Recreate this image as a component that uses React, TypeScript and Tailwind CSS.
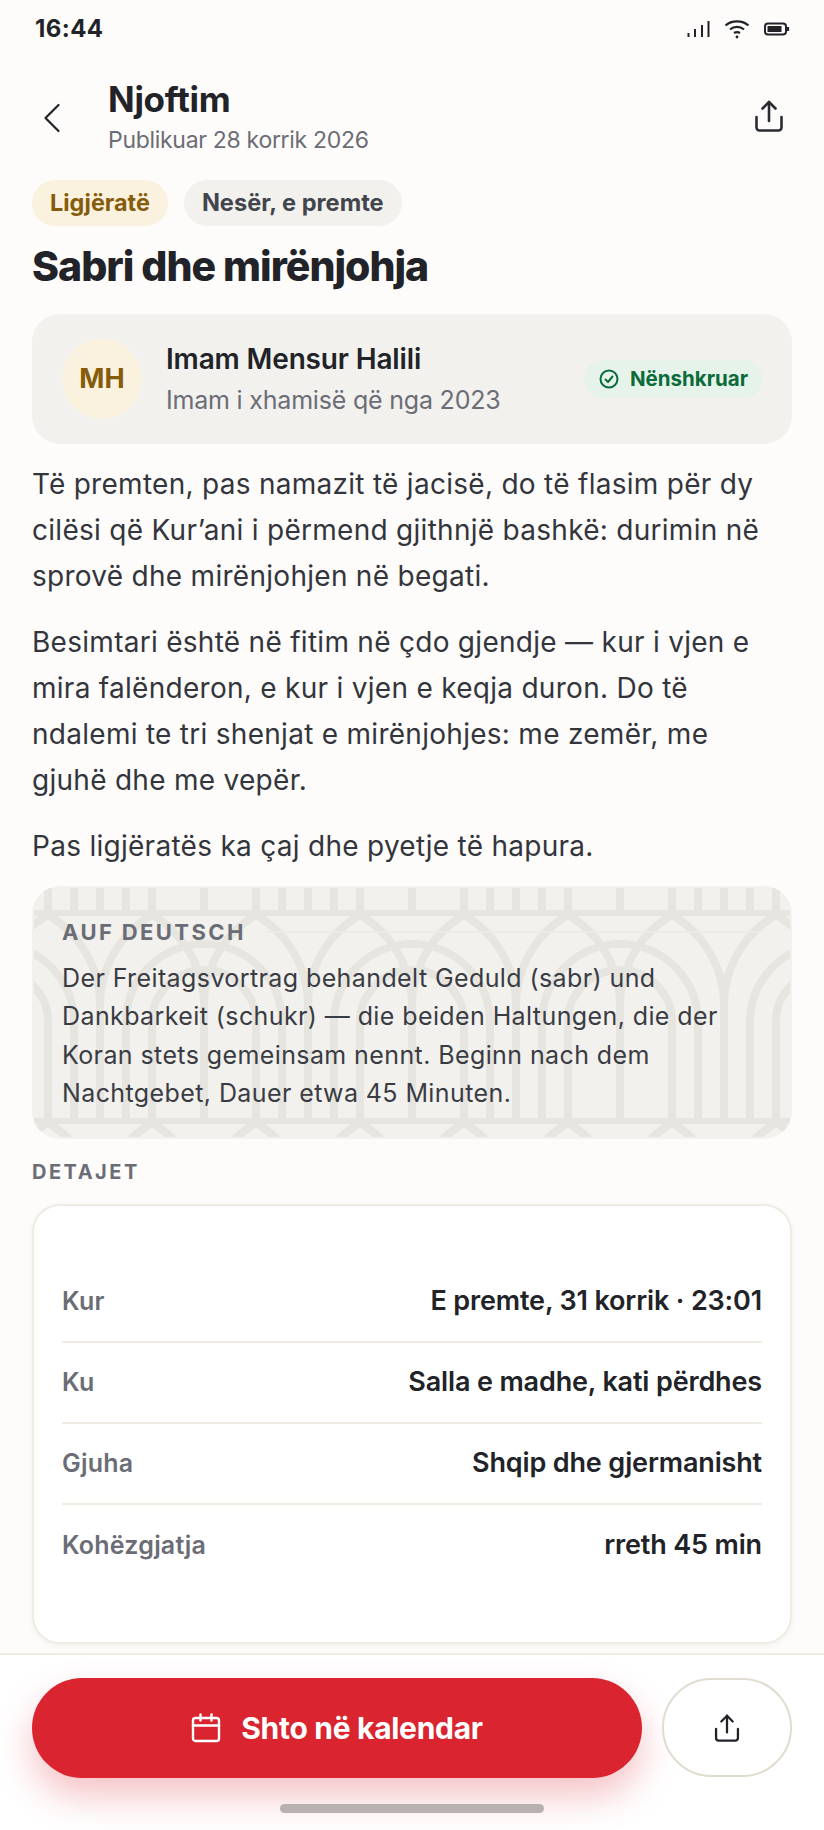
const rows = [
  { label: 'Kur', value: 'E premte, 31 korrik · 23:01' },
  { label: 'Ku', value: 'Salla e madhe, kati përdhes' },
  { label: 'Gjuha', value: 'Shqip dhe gjermanisht' },
  { label: 'Kohëzgjatja', value: 'rreth 45 min' },
];

function StatusIcons() {
  return (
    <div className="flex items-center gap-[14px]">
      <svg width="23" height="18" viewBox="0 0 23 18" fill="none" stroke="#212328" strokeWidth="2">
        <path d="M1.5 17v-4" />
        <path d="M8 17V9" />
        <path d="M15 17V5" />
        <path d="M21.5 17V1" />
      </svg>
      <svg width="26" height="20" viewBox="0 0 26 20" fill="none" stroke="#212328" strokeWidth="2.2">
        <path d="M1.5 6.5C7.5 1 18.5 1 24.5 6.5" />
        <path d="M6 10.5c4-3.4 10-3.4 14 0" />
        <path d="M10 14c2-1.3 4-1.3 6 0" />
        <circle cx="13" cy="18" r="1.4" fill="#212328" stroke="none" />
      </svg>
      <svg width="26" height="14" viewBox="0 0 26 14" fill="none">
        <rect x="1" y="1.5" width="21" height="11" rx="3" stroke="#212328" strokeWidth="2" />
        <rect x="3.5" y="4" width="14" height="6" fill="#212328" />
        <path d="M24 5v4" stroke="#212328" strokeWidth="2.2" />
      </svg>
    </div>
  );
}

function ShareIcon({ size, color }: { size: number; color: string }) {
  return (
    <svg width={size} height={size} viewBox="0 0 28 32" fill="none" stroke={color} strokeWidth="2.6" strokeLinecap="round" strokeLinejoin="round">
      <path d="M14 21V2" />
      <path d="M7.5 8.5 14 2l6.5 6.5" />
      <path d="M1.5 17v10.5a3 3 0 0 0 3 3h19a3 3 0 0 0 3-3V17" />
    </svg>
  );
}

function ArchPattern() {
  return (
    <svg className="absolute inset-[2px] w-[calc(100%-4px)] h-[calc(100%-4px)]" aria-hidden="true">
      <defs>
        <pattern id="arches" x="66" y="22" width="208" height="208" patternUnits="userSpaceOnUse">
          <g fill="none" stroke="#e6e5e0" strokeWidth="8">
            <path d="M-104 208V95A104 104 0 0 1 104 95V208" />
            <path d="M0 208V95A104 104 0 0 1 208 95V208" />
            <path d="M104 208V95A104 104 0 0 1 312 95V208" />
            <path d="M26 208V112A78 78 0 0 1 182 112V208" />
            <path d="M52 208V112A52 52 0 0 1 156 112V208" />
            <path d="M-182 208V112A78 78 0 0 1 -26 112V208" />
            <path d="M234 208V112A78 78 0 0 1 390 112V208" />
          </g>
          <rect x="0" y="0" width="208" height="6" fill="#e6e5e0" />
        </pattern>
      </defs>
      <rect width="100%" height="100%" fill="url(#arches)" />
    </svg>
  );
}

export default function App() {
  return (
    <div className="w-[824px] h-[1830px] flex flex-col overflow-hidden bg-[#fdfcfa] text-[#212328] font-['Inter',sans-serif]">
      <div className="h-[58px] shrink-0 flex items-center justify-between pl-[35px] pr-[34px]">
        <span className="text-[24px] font-bold tracking-[0.4px]">16:44</span>
        <StatusIcons />
      </div>

      <div className="flex-1 min-h-0 px-[32px]">
        <div className="flex items-start justify-between h-[122px]">
          <div className="flex items-start">
            <svg className="mt-[45px] ml-[11px]" width="18" height="30" viewBox="0 0 18 30" fill="none" stroke="#212328" strokeWidth="2.2" strokeLinecap="round" strokeLinejoin="round">
              <path d="M15.5 2 2.5 15l13 13" />
            </svg>
            <div className="ml-[47px] mt-[19px]">
              <div className="text-[35px] leading-[44px] font-bold tracking-[-0.3px]">Njoftim</div>
              <div className="text-[23px] leading-[30px] mt-[4px] text-[#6b6d76] tracking-[-0.3px]">Publikuar 28 korrik 2026</div>
            </div>
          </div>
          <div className="mt-[42px] mr-[7px]">
            <ShareIcon size={32} color="#2a2c31" />
          </div>
        </div>

        <div className="flex gap-[16px]">
          <span className="h-[46px] flex items-center px-[18px] rounded-full bg-[#fbf1df] text-[#855c0a] text-[23.4px] font-bold">Ligjëratë</span>
          <span className="h-[46px] flex items-center px-[18px] rounded-full bg-[#f2f1ed] text-[#43454d] text-[23.6px] font-bold">Nesër, e premte</span>
        </div>

        <h1 className="mt-[13px] text-[41px] leading-[54px] font-extrabold tracking-[-1px]">Sabri dhe mirënjohja</h1>

        <div className="mt-[21px] h-[130px] rounded-[28px] bg-[#f2f1ed] flex items-center pl-[30px] pr-[30px]">
          <div className="w-[80px] h-[80px] rounded-full bg-[#fbf1df] flex items-center justify-center text-[#855c0a] text-[27px] font-bold">MH</div>
          <div className="ml-[24px] flex-1">
            <div className="text-[28px] leading-[36px] font-semibold tracking-[-0.15px]">Imam Mensur Halili</div>
            <div className="text-[25px] leading-[34px] mt-[6px] text-[#6b6d76] tracking-[-0.2px]">Imam i xhamisë që nga 2023</div>
          </div>
          <div className="h-[38px] pl-[15px] pr-[14px] rounded-full bg-[#e5f3ea] flex items-center gap-[11px] text-[#0b6b3a] text-[20.5px] font-bold">
            <svg width="20" height="20" viewBox="0 0 20 20" fill="none" stroke="#0b6b3a" strokeWidth="2" strokeLinecap="round" strokeLinejoin="round">
              <circle cx="10" cy="10" r="8.5" />
              <path d="m6.5 10.5 2.5 2.5 4.5-5.5" />
            </svg>
            Nënshkruar
          </div>
        </div>

        <div className="mt-[17px] text-[28px] leading-[46px] text-[#33353c] tracking-[0.28px]">
          <p>Të premten, pas namazit të jacisë, do të flasim për dy cilësi që Kur’ani i përmend gjithnjë bashkë: durimin në sprovë dhe mirënjohjen në begati.</p>
          <p className="mt-[20px]">Besimtari është në fitim në çdo gjendje — kur i vjen e mira falënderon, e kur i vjen e keqja duron. Do të ndalemi te tri shenjat e mirënjohjes: me zemër, me<br />gjuhë dhe me vepër.</p>
          <p className="mt-[20px]">Pas ligjëratës ka çaj dhe pyetje të hapura.</p>
        </div>

        <div className="relative mt-[17px] h-[253px] rounded-[28px] bg-[#f2f1ed] overflow-hidden">
          <ArchPattern />
          <div className="relative px-[30px] pt-[31px]">
            <div className="flex items-center gap-[20px]">
              <span className="text-[22px] leading-[30px] font-bold tracking-[2.4px] text-[#6b6d76]">AUF DEUTSCH</span>
              <span className="flex-1 h-[2px] bg-[#efeae3]"></span>
            </div>
            <p className="mt-[12px] text-[25px] leading-[38.3px] text-[#3a3c44] tracking-[0.4px]">Der Freitagsvortrag behandelt Geduld (sabr) und Dankbarkeit (schukr) — die beiden Haltungen, die der Koran stets gemeinsam nennt. Beginn nach dem Nachtgebet, Dauer etwa 45 Minuten.</p>
          </div>
        </div>

        <div className="mt-[18px] text-[20px] leading-[30px] font-bold tracking-[2.5px] text-[#6b6d76]">DETAJET</div>

        <div className="mt-[17px] h-[440px] rounded-[28px] border-2 border-[#efebe3] bg-white px-[28px] pt-[56px] shadow-[0_2px_6px_rgba(60,50,30,0.06)]">
          {rows.map((row, i) => (
            <div key={row.label} className={`h-[81px] flex items-center justify-between ${i < rows.length - 1 ? 'border-b-2 border-[#efebe3]' : ''}`}>
              <span className="text-[25px] font-semibold tracking-[0.2px] text-[#6b6d76]">{row.label}</span>
              <span className="text-[27px] font-semibold tracking-[-0.15px]">{row.value}</span>
            </div>
          ))}
        </div>
      </div>

      <div className="relative h-[177px] shrink-0 bg-white border-t-2 border-[#efebe3] pt-[23px] px-[32px]">
        <div className="flex gap-[20px]">
          <button className="w-[610px] h-[100px] rounded-full bg-[#da2430] text-white flex items-center justify-center gap-[20px] text-[30px] font-bold tracking-[-0.3px] shadow-[0_18px_36px_rgba(218,36,48,0.28)]">
            <svg width="30" height="30" viewBox="0 0 30 30" fill="none" stroke="#ffffff" strokeWidth="2.4" strokeLinecap="round" strokeLinejoin="round">
              <rect x="2" y="5" width="26" height="23" rx="2.5" />
              <path d="M2 12.5h26" />
              <path d="M9.5 1.5v6" />
              <path d="M20.5 1.5v6" />
            </svg>
            Shto në kalendar
          </button>
          <button className="w-[130px] h-[99px] rounded-full border-2 border-[#e0dcd0] bg-white flex items-center justify-center">
            <ShareIcon size={28} color="#212328" />
          </button>
        </div>
        <div className="absolute left-[280px] top-[149px] w-[264px] h-[9px] rounded-full bg-[#b9b0b0]"></div>
      </div>
    </div>
  );
}
